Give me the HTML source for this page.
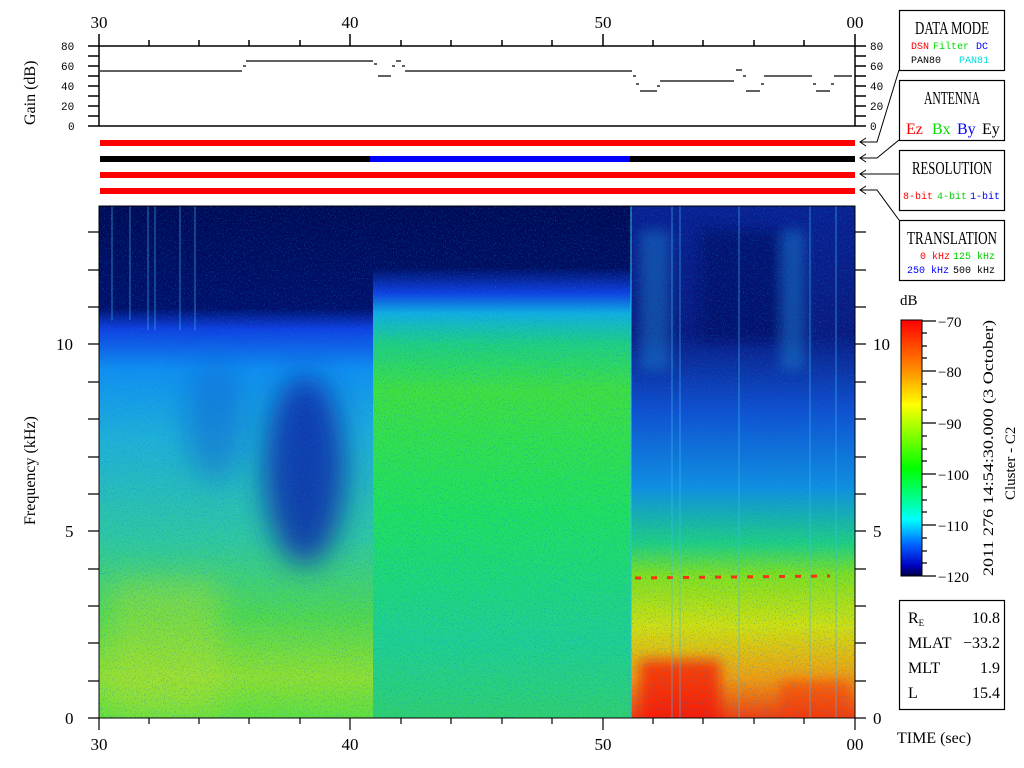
<!DOCTYPE html>
<html><head><meta charset="utf-8"><style>
html,body{margin:0;padding:0;background:#fff;width:1024px;height:768px;overflow:hidden}
svg{display:block}
.s{font-family:"Liberation Serif",serif}
.m{font-family:"Liberation Mono",monospace}
</style></head><body>
<svg width="1024" height="768" viewBox="0 0 1024 768" xmlns="http://www.w3.org/2000/svg">
<defs>
<linearGradient id="gA" x1="0" y1="0" x2="0" y2="1">
<stop offset="0" stop-color="#000a55"/><stop offset="0.2" stop-color="#00106a"/>
<stop offset="0.24" stop-color="#1040e0"/><stop offset="0.32" stop-color="#1090f0"/>
<stop offset="0.45" stop-color="#20b0d8"/><stop offset="0.65" stop-color="#30c8a0"/>
<stop offset="0.8" stop-color="#50d850"/><stop offset="0.92" stop-color="#90e030"/><stop offset="1" stop-color="#60e040"/>
</linearGradient>
<linearGradient id="gB" x1="0" y1="0" x2="0" y2="1">
<stop offset="0" stop-color="#000a55"/><stop offset="0.12" stop-color="#000e60"/>
<stop offset="0.17" stop-color="#1040e0"/><stop offset="0.21" stop-color="#10b0e0"/>
<stop offset="0.27" stop-color="#20d080"/><stop offset="0.36" stop-color="#40e040"/>
<stop offset="0.6" stop-color="#20e060"/><stop offset="0.85" stop-color="#20d090"/><stop offset="1" stop-color="#30d070"/>
</linearGradient>
<linearGradient id="gC" x1="0" y1="0" x2="0" y2="1">
<stop offset="0" stop-color="#0a2090"/><stop offset="0.25" stop-color="#0a1a80"/>
<stop offset="0.4" stop-color="#1050d0"/><stop offset="0.55" stop-color="#1090e0"/>
<stop offset="0.66" stop-color="#20d080"/><stop offset="0.72" stop-color="#80e020"/>
<stop offset="0.82" stop-color="#d0e010"/><stop offset="0.92" stop-color="#f0a010"/><stop offset="1" stop-color="#f04010"/>
</linearGradient>
<linearGradient id="cb" x1="0" y1="0" x2="0" y2="1">
<stop offset="0" stop-color="#ff0000"/><stop offset="0.2" stop-color="#ff9000"/>
<stop offset="0.33" stop-color="#ffff00"/><stop offset="0.58" stop-color="#00ff00"/>
<stop offset="0.7" stop-color="#00ff90"/><stop offset="0.78" stop-color="#00ffff"/>
<stop offset="0.88" stop-color="#0060ff"/><stop offset="0.96" stop-color="#0000c0"/><stop offset="1" stop-color="#000040"/>
</linearGradient>
<filter id="bl" x="-50%" y="-50%" width="200%" height="200%"><feGaussianBlur stdDeviation="14"/></filter>
<filter id="bl2" x="-50%" y="-50%" width="200%" height="200%"><feGaussianBlur stdDeviation="6"/></filter>
<clipPath id="sp"><rect x="99" y="206" width="756" height="512"/></clipPath>
<filter id="nz" x="0" y="0" width="1" height="1"><feTurbulence type="fractalNoise" baseFrequency="0.9 0.6" numOctaves="1" seed="3"/><feColorMatrix values="0 0 0 0 0  0 0 0 0 0.2  0 0 0 0 0.8  0 0 0 3 -1.6"/></filter>
</defs>

<!-- spectrogram -->
<rect x="99" y="206" width="274" height="512" fill="url(#gA)"/>
<g clip-path="url(#sp)">
<ellipse cx="305" cy="470" rx="40" ry="95" fill="#0a2aa8" opacity=".85" filter="url(#bl)"/>
<ellipse cx="215" cy="420" rx="30" ry="60" fill="#1060d0" opacity=".5" filter="url(#bl)"/>
<rect x="110" y="580" width="110" height="138" fill="#b0e030" opacity=".45" filter="url(#bl)"/>
</g>
<rect x="373" y="206" width="258" height="512" fill="url(#gB)"/>
<rect x="631" y="206" width="224" height="512" fill="url(#gC)"/>
<g clip-path="url(#sp)">
<rect x="640" y="660" width="80" height="70" fill="#ff1000" opacity=".7" filter="url(#bl2)"/>
<rect x="780" y="680" width="70" height="50" fill="#ff3000" opacity=".5" filter="url(#bl2)"/>
<rect x="700" y="230" width="80" height="110" fill="#000a60" opacity=".6" filter="url(#bl2)"/>
<rect x="640" y="230" width="30" height="140" fill="#20a0e0" opacity=".35" filter="url(#bl2)"/>
<rect x="780" y="230" width="25" height="140" fill="#20a0e0" opacity=".35" filter="url(#bl2)"/>
</g>
<line x1="635" y1="578" x2="830" y2="576" stroke="#ff3010" stroke-width="3" stroke-dasharray="6 10"/>
<g stroke="#40c0f0" stroke-width="1" opacity=".6">
<line x1="112" y1="206" x2="112" y2="320"/><line x1="130" y1="206" x2="130" y2="320"/><line x1="148" y1="206" x2="148" y2="330"/><line x1="155" y1="206" x2="155" y2="330"/><line x1="180" y1="206" x2="180" y2="330"/><line x1="195" y1="206" x2="195" y2="330"/>
<line x1="672" y1="206" x2="672" y2="718"/><line x1="680" y1="206" x2="680" y2="718"/><line x1="739" y1="206" x2="739" y2="718"/><line x1="810" y1="206" x2="810" y2="718"/><line x1="836" y1="206" x2="836" y2="718"/>
</g>
<line x1="631" y1="206" x2="631" y2="718" stroke="#30c0e0" stroke-width="1"/>
<rect x="99" y="206" width="756" height="512" filter="url(#nz)" opacity=".5"/>
<rect x="99" y="206" width="756" height="512" fill="none" stroke="#000" stroke-width="1"/>

<!-- bars -->
<rect x="100" y="140" width="755" height="6" fill="#f00"/>
<rect x="100" y="156" width="270" height="6" fill="#000"/>
<rect x="370" y="156" width="260" height="6" fill="#00f"/>
<rect x="630" y="156" width="225" height="6" fill="#000"/>
<rect x="100" y="172" width="755" height="6" fill="#f00"/>
<rect x="100" y="188" width="755" height="6" fill="#f00"/>

<!-- gain plot -->
<g stroke="#000" stroke-width="1.5" fill="none">
<line x1="88" y1="46" x2="866" y2="46"/><line x1="88" y1="126" x2="866" y2="126"/>
<line x1="99" y1="34" x2="99" y2="126"/><line x1="855" y1="34" x2="855" y2="126"/>
<line x1="350" y1="34" x2="350" y2="46"/><line x1="603" y1="34" x2="603" y2="46"/>
<path d="M149 40v6M199 40v6M249 40v6M300 40v6M401 40v6M451 40v6M502 40v6M552 40v6M653 40v6M703 40v6M754 40v6M804 40v6"/>
<path d="M88 56h11M88 66h11M88 76h11M88 86h11M88 96h11M88 106h11M88 116h11M855 56h11M855 66h11M855 76h11M855 86h11M855 96h11M855 106h11M855 116h11"/>
<path d="M100 71H242M246 61H373M378 76H391M396 61H401M405 71H632M640 91H657M660 81H734M736 70H742M746 91H760M764 76H812M816 91H830M834 76H852" stroke-width="1.2"/>
<path d="M243 66h3M374 64h3M392 66h3M402 66h3M633 76h3M636 84h3M657 86h3M743 76h3M761 84h3M813 84h3M831 84h3" stroke-width="1.2"/>
</g>
<g class="m" font-size="11" fill="#000">
<text x="61" y="50">80</text><text x="61" y="70">60</text><text x="61" y="90">40</text><text x="61" y="110">20</text><text x="68" y="130">0</text>
<text x="870" y="50">80</text><text x="870" y="70">60</text><text x="870" y="90">40</text><text x="870" y="110">20</text><text x="870" y="130">0</text>
</g>
<g class="s" font-size="17" fill="#000" text-anchor="middle">
<text x="99" y="28">30</text><text x="350" y="28">40</text><text x="603" y="28">50</text><text x="855" y="28">00</text>
<text x="99" y="750">30</text><text x="350" y="750">40</text><text x="603" y="750">50</text><text x="855" y="750">00</text>
</g>
<text class="s" font-size="16" transform="translate(35,125) rotate(-90)">Gain (dB)</text>
<text class="s" font-size="16" transform="translate(35,525) rotate(-90)">Frequency (kHz)</text>

<!-- spectrogram ticks -->
<g stroke="#000" stroke-width="1.2">
<path d="M88 718h11M88 681h11M88 643h11M88 606h11M88 569h11M88 531h11M88 494h11M88 457h11M88 419h11M88 382h11M88 344h11M88 307h11M88 270h11M88 232h11"/>
<path d="M855 718h11M855 681h11M855 643h11M855 606h11M855 569h11M855 531h11M855 494h11M855 457h11M855 419h11M855 382h11M855 344h11M855 307h11M855 270h11M855 232h11"/>
<path d="M99 718v12M350 718v12M603 718v12M855 718v12M149 718v6M199 718v6M249 718v6M300 718v6M401 718v6M451 718v6M502 718v6M552 718v6M653 718v6M703 718v6M754 718v6M804 718v6"/>
</g>
<g class="s" font-size="17" fill="#000">
<text x="65" y="724">0</text><text x="65" y="537">5</text><text x="56" y="350">10</text>
<text x="873" y="724">0</text><text x="873" y="537">5</text><text x="873" y="350">10</text>
</g>

<!-- connector lines -->
<g stroke="#000" stroke-width="1" fill="none">
<path d="M899 70L877 142H860M866 138l-6 4 6 4"/>
<path d="M899 140L877 158H860M866 154l-6 4 6 4"/>
<path d="M899 174H860M866 170l-6 4 6 4"/>
<path d="M899 220L877 190H860M866 186l-6 4 6 4"/>
</g>
<!-- boxes -->
<g fill="#fff" stroke="#000" stroke-width="1.2">
<rect x="899.5" y="10.5" width="105" height="60"/>
<rect x="899.5" y="80.5" width="105" height="60"/>
<rect x="899.5" y="150.5" width="105" height="60"/>
<rect x="899.5" y="220.5" width="105" height="60"/>
<rect x="899.5" y="600.5" width="105" height="109"/>
</g>
<g class="s" font-size="18" text-anchor="middle" fill="#000">
<text x="952" y="34" textLength="74" lengthAdjust="spacingAndGlyphs">DATA MODE</text>
<text x="952" y="104" textLength="56" lengthAdjust="spacingAndGlyphs">ANTENNA</text>
<text x="952" y="174" textLength="80" lengthAdjust="spacingAndGlyphs">RESOLUTION</text>
<text x="952" y="244" textLength="90" lengthAdjust="spacingAndGlyphs">TRANSLATION</text>
</g>
<g class="m" font-size="10">
<text x="911" y="49" fill="#f00">DSN</text><text x="933" y="49" fill="#0d0">Filter</text><text x="976" y="49" fill="#00f">DC</text>
<text x="911" y="63" fill="#000">PAN80</text><text x="959" y="63" fill="#0dd">PAN81</text>
<text x="903" y="199" fill="#f00">8-bit</text><text x="937" y="199" fill="#0c0">4-bit</text><text x="970" y="199" fill="#00f">1-bit</text>
<text x="920" y="259" fill="#f00">0 kHz</text><text x="953" y="259" fill="#0c0">125 kHz</text>
<text x="907" y="273" fill="#00f">250 kHz</text><text x="953" y="273" fill="#000">500 kHz</text>
</g>
<g class="s" font-size="16">
<text x="906" y="134" fill="#f00">Ez</text><text x="932" y="134" fill="#0d0">Bx</text><text x="957" y="134" fill="#00f">By</text><text x="982" y="134" fill="#000">Ey</text>
</g>

<!-- colorbar -->
<text class="s" font-size="15" x="900" y="305">dB</text>
<rect x="901" y="320" width="21" height="256" fill="url(#cb)" stroke="#000" stroke-width="1"/>
<g stroke="#000" stroke-width="1.2">
<path d="M922 321h14M922 371h14M922 423h14M922 474h14M922 525h14M922 576h14"/>
<path d="M922 333h5M922 346h5M922 358h5M922 384h5M922 397h5M922 410h5M922 436h5M922 449h5M922 461h5M922 487h5M922 500h5M922 512h5M922 538h5M922 551h5M922 563h5"/>
</g>
<g class="s" font-size="15" fill="#000">
<text x="938" y="327">−70</text><text x="938" y="377">−80</text><text x="938" y="429">−90</text>
<text x="938" y="480">−100</text><text x="938" y="531">−110</text><text x="938" y="582">−120</text>
</g>
<text class="s" font-size="15" transform="translate(993,576) rotate(-90)" textLength="256" lengthAdjust="spacingAndGlyphs">2011 276 14:54:30.000 (3 October)</text>
<text class="s" font-size="15" transform="translate(1015,500) rotate(-90)">Cluster - C2</text>

<!-- info box -->
<g class="s" font-size="16" fill="#000">
<text x="908" y="623">R<tspan font-size="9" dy="3">E</tspan></text><text x="1000" y="623" text-anchor="end">10.8</text>
<text x="908" y="648">MLAT</text><text x="1000" y="648" text-anchor="end">−33.2</text>
<text x="908" y="673">MLT</text><text x="1000" y="673" text-anchor="end">1.9</text>
<text x="908" y="698">L</text><text x="1000" y="698" text-anchor="end">15.4</text>
<text x="897" y="743">TIME (sec)</text>
</g>
</svg>
</body></html>
